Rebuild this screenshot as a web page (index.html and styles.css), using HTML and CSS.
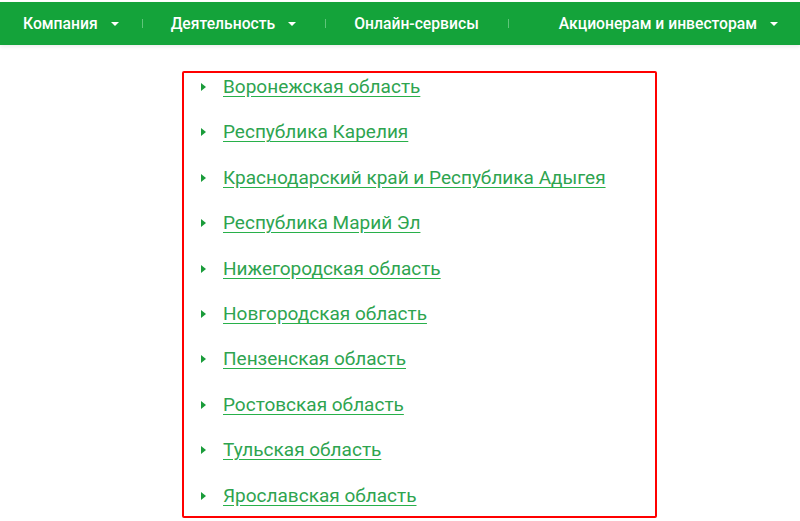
FILE: index.html
```html
<!DOCTYPE html>
<html lang="ru">

<head>
    <meta charset="UTF-8">
    <meta name="viewport" content="width=device-width, initial-scale=1.0">
    <title>Регионы</title>
    <link rel="stylesheet" href="styles.css">
</head>

<body>

    <div class="nav">
        <a class="nav-item" href="#">Компания <span class="caret"></span></a>
        <span class="sep first"></span>
        <a class="nav-item" href="#">Деятельность <span class="caret"></span></a>
        <span class="sep"></span>
        <a class="nav-item" href="#">Онлайн-сервисы</a>
        <span class="sep"></span>
        <a class="nav-item wide" href="#">Акционерам и инвесторам <span class="caret"></span></a>
    </div>

    <div class="regions">
        <ul class="region-list">
            <li><a href="#">Воронежская область</a></li>
            <li><a href="#">Республика Карелия</a></li>
            <li><a href="#">Краснодарский край и Республика Адыгея</a></li>
            <li><a href="#">Республика Марий Эл</a></li>
            <li><a href="#">Нижегородская область</a></li>
            <li><a href="#">Новгородская область</a></li>
            <li><a href="#">Пензенская область</a></li>
            <li><a href="#">Ростовская область</a></li>
            <li><a href="#">Тульская область</a></li>
            <li><a href="#">Ярославская область</a></li>
        </ul>
    </div>

</body>

</html>
```

FILE: styles.css
```css
body {
    font-family: Roboto, "Liberation Sans", Arial, sans-serif;
    margin: 0;
    padding: 2px 0 0;
    background: #fff;
}

/* Top menu */
.nav {
    display: flex;
    align-items: center;
    height: 43px;
    background-color: #14a33a;
    box-shadow: 0 2px 4px rgba(0, 0, 0, 0.08);
    padding-left: 23px;
}

.nav-item {
    display: flex;
    align-items: center;
    color: #fff;
    font-size: 15.7px;
    font-weight: 500;
    text-decoration: none;
    white-space: nowrap;
}

.caret {
    width: 0;
    height: 0;
    margin-left: 13px;
    border-left: 4px solid transparent;
    border-right: 4px solid transparent;
    border-top: 4px solid #fff;
}

.sep {
    width: 1px;
    height: 9px;
    background-color: #5fc57a;
    margin: 0 28px 0 29px;
}

.sep.first {
    margin-left: 23px;
}

.nav-item.wide {
    margin-left: 22px;
}

/* Regions list */
.regions {
    width: 471px;
    margin: 26px 0 0 182px;
    border: 2px solid #ff0000;
    border-radius: 2px;
    padding: 2px 0 8px;
}

.region-list {
    list-style: none;
    margin: 0;
    padding: 0;
}

.region-list li {
    position: relative;
    padding-left: 39px;
    font-size: 19px;
    line-height: 24px;
    margin-bottom: 21.4px;
}

.region-list li:last-child {
    margin-bottom: 0;
}

.region-list li::before {
    content: "";
    position: absolute;
    left: 17px;
    top: 8px;
    border-top: 4px solid transparent;
    border-bottom: 4px solid transparent;
    border-left: 5px solid #1a9c3a;
}

.region-list a {
    color: #2ea44f;
    text-decoration: underline;
    text-decoration-color: #28b04a;
    text-underline-offset: 3px;
}
```
